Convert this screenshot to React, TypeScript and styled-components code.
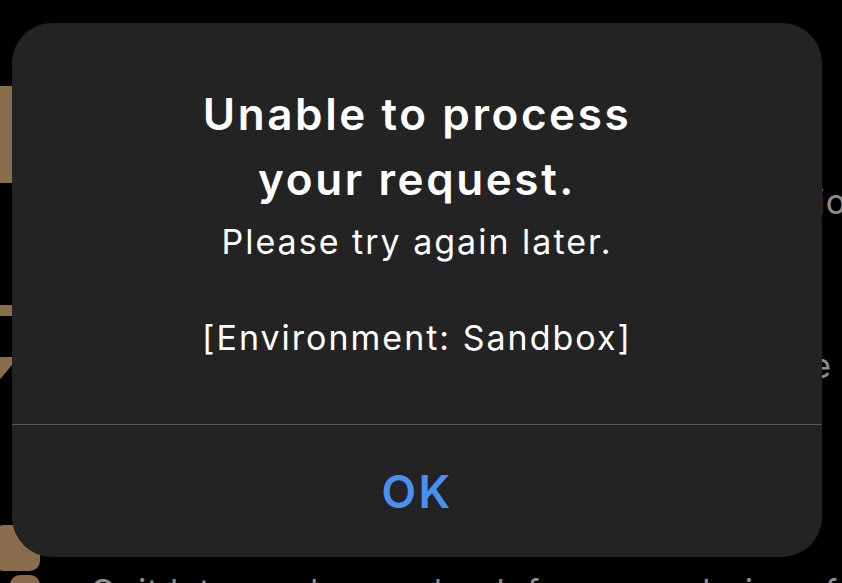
import styled, { createGlobalStyle } from "styled-components";

const GlobalStyle = createGlobalStyle`
    html, body {
        margin: 0;
        padding: 0;
        background: #000;
        overflow: hidden;
    }
    body {
        font-family: Inter, "Noto Sans", "DejaVu Sans", sans-serif;
        -webkit-font-smoothing: antialiased;
    }
`;

const Page = styled.div`
    position: relative;
    width: 842px;
    height: 583px;
    background: #000;
    overflow: hidden;
`;

// the settings list that sits behind the alert
const List = styled.div`
    display: flex;
    flex-direction: column;
`;

const Row = styled.div<{ $height: number }>`
    display: flex;
    align-items: flex-start;
    gap: 50px;
    height: ${(p) => p.$height}px;
`;

const RowIcon = styled.div<{ $top: number; $size: number; $cut?: boolean }>`
    flex: none;
    width: ${(p) => p.$size}px;
    height: ${(p) => p.$size}px;
    margin-top: ${(p) => p.$top}px;
    margin-left: ${(p) => 40 - p.$size}px;
    background: #8a6d4c;
    border-radius: 10px;
    clip-path: ${(p) => (p.$cut ? "polygon(0 30%, 30% 0, 100% 0, 100% 100%, 0 100%)" : "none")};
`;

const GlyphIcon = styled.svg<{ $top: number }>`
    flex: none;
    width: 40px;
    height: 100px;
    margin-top: ${(p) => p.$top}px;
    margin-left: -28px;
`;

const RowText = styled.div<{ $top: number }>`
    margin-top: ${(p) => p.$top}px;
    color: #8c8c8c;
    font-size: 34px;
    line-height: 44px;
    letter-spacing: 1px;
    white-space: nowrap;
`;

const Overlay = styled.div`
    position: absolute;
    inset: 0;
    display: flex;
    padding: 23px 20px 26px 12px;
`;

const Dialog = styled.div`
    flex: 1;
    display: flex;
    flex-direction: column;
    background: #232323;
    border-radius: 40px;
    overflow: hidden;
`;

const Body = styled.div`
    flex: 1;
    display: flex;
    flex-direction: column;
    align-items: center;
    padding-top: 59px;
    text-align: center;
    color: #fff;
`;

const Title = styled.h1`
    margin: 0;
    font-size: 44px;
    font-weight: 600;
    line-height: 65px;
    letter-spacing: 2.6px;
`;

const Message = styled.p`
    margin: 6px 0 0;
    font-size: 34px;
    font-weight: 400;
    line-height: 48px;
    letter-spacing: 2px;
    white-space: pre-line;
`;

const Divider = styled.div`
    height: 1px;
    background: #595959;
`;

const OkButton = styled.button`
    height: 132px;
    border: 0;
    background: transparent;
    color: #4a8ff2;
    font-family: inherit;
    font-size: 45px;
    font-weight: 600;
    letter-spacing: 2.4px;
    cursor: pointer;
`;

export default function App() {
    return (
        <Page>
            <GlobalStyle />
            <List>
                <Row $height={300}>
                    <RowIcon $top={86} $size={97} $cut />
                    <RowText $top={180}>Manage your subscription and renewal options with ease</RowText>
                </Row>
                <Row $height={220}>
                    <GlyphIcon $top={5} viewBox="0 0 40 100">
                        <rect x="0" y="0" width="40" height="11" fill="#8a6d4c" />
                        <path d="M0 52 H40 V60 L8 98 H0 Z" fill="#8a6d4c" />
                    </GlyphIcon>
                    <RowText $top={44}>Restore your earlier purchases on this device for free</RowText>
                </Row>
                <Row $height={55}>
                    <RowIcon $top={5} $size={46} />
                    <RowText $top={50}>Quit later and come back for more choices for</RowText>
                </Row>
                <Row $height={40}>
                    <RowIcon $top={0} $size={30} />
                </Row>
            </List>
            <Overlay>
                <Dialog role="alertdialog">
                    <Body>
                        <Title>
                            Unable to process
                            <br />
                            your request.
                        </Title>
                        <Message>{"Please try again later.\n\n[Environment: Sandbox]"}</Message>
                    </Body>
                    <Divider />
                    <OkButton>OK</OkButton>
                </Dialog>
            </Overlay>
        </Page>
    );
}
